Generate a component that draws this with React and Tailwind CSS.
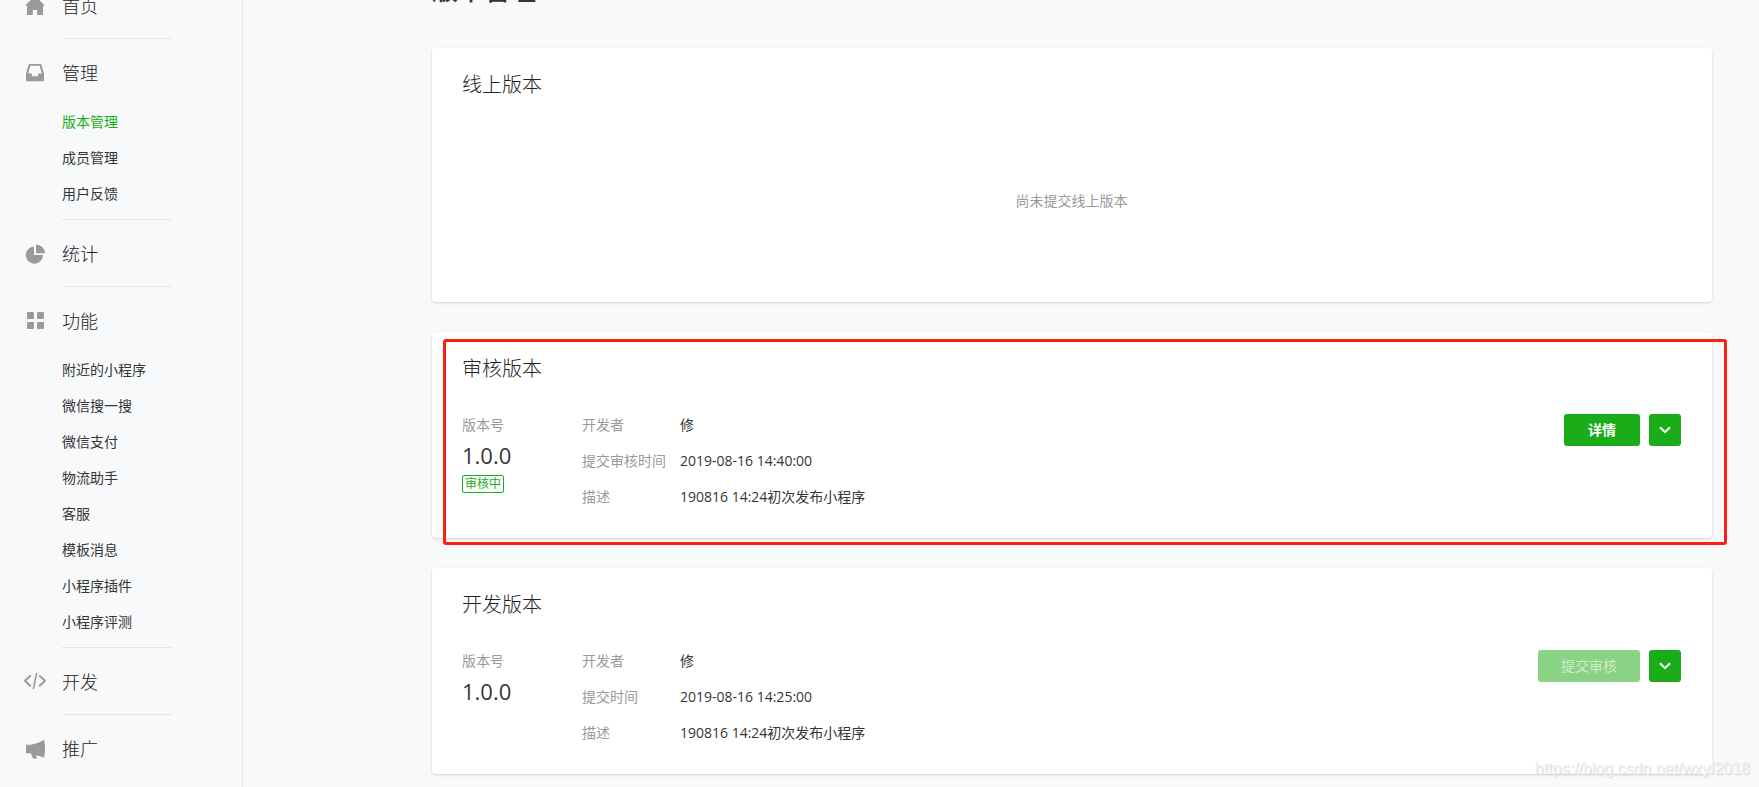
import { useState } from 'react';

const HomeIcon = () => (
  <svg viewBox="0 0 22 22" className="h-[22px] w-[22px]" fill="currentColor">
    <path d="M11 1 1 10.600h2V20h5.800v-5h4.400v5H19v-9.400h2L11 1z" />
  </svg>
);

const InboxIcon = () => (
  <svg viewBox="0 0 22 22" className="h-[22px] w-[22px]" fill="currentColor">
    <path
      fillRule="evenodd"
      d="M5.600 2h10.800c.6 0 1 .3 1.200.9L20 12v6.200a1 1 0 0 1-1 1H3a1 1 0 0 1-1-1V12l2.400-9.100c.2-.6.6-.9 1.200-.9zM6.300 3.800 4.200 11.600h3.600v2.700h6.400v-2.700h3.600l-2.100-7.800H6.300z"
    />
  </svg>
);

const PieIcon = () => (
  <svg viewBox="0 0 22 22" className="h-[22px] w-[22px]" fill="currentColor">
    <path d="M10 3.500v8.500h9a8.600 8.600 0 1 1-9-8.500z" />
    <path d="M12 1.500a9 9 0 0 1 9 8.700h-9V1.500z" />
  </svg>
);

const GridIcon = () => (
  <svg viewBox="0 0 22 22" className="h-[22px] w-[22px]" fill="currentColor">
    <rect x="3" y="2" width="7" height="7" rx="1" />
    <rect x="13" y="2" width="7" height="7" rx="1" />
    <rect x="3" y="12" width="7" height="7" rx="1" />
    <rect x="13" y="12" width="7" height="7" rx="1" />
  </svg>
);

const CodeIcon = () => (
  <svg viewBox="0 0 22 22" className="h-[22px] w-[22px]" fill="none" stroke="currentColor">
    <path d="M6.800 4.500 1 9.800l5.800 5.400M15.200 4.500l5.800 5.300-5.800 5.400" strokeWidth="2" />
    <path d="M12.600 2 9.400 18" strokeWidth="1.600" />
  </svg>
);

const HornIcon = () => (
  <svg viewBox="0 0 22 22" className="h-[22px] w-[22px]" fill="currentColor">
    <path d="M2 6.700h4.500C11 6.200 16 4.300 20 1.700c1.400 5.500 1.400 12.500 0 18-2.500-1.200-5-2-7.800-2.500l.8 3.300H8.800L7 15.200H2V6.700z" />
  </svg>
);

const ArrowIcon = () => (
  <svg viewBox="0 0 12 8" className="h-2 w-3" fill="none" stroke="currentColor" strokeWidth="2">
    <path d="M1 1.200 6 6.200l5-5" />
  </svg>
);

const menu = [
  { name: '首页', icon: HomeIcon, children: [] },
  { name: '管理', icon: InboxIcon, children: ['版本管理', '成员管理', '用户反馈'] },
  { name: '统计', icon: PieIcon, children: [] },
  {
    name: '功能',
    icon: GridIcon,
    children: ['附近的小程序', '微信搜一搜', '微信支付', '物流助手', '客服', '模板消息', '小程序插件', '小程序评测'],
  },
  { name: '开发', icon: CodeIcon, children: [] },
  { name: '推广', icon: HornIcon, children: [] },
];

const Sidebar = () => {
  const [active, setActive] = useState('版本管理');

  return (
    <nav className="w-[243px] shrink-0 border-r border-[#e4e6e9]">
      <ul className="-mt-7">
        {menu.map(({ name, icon: Icon, children }) => (
          <li key={name} className="group">
            <a href="#" className="flex items-center pt-5 text-lg font-light leading-7 text-[#222222]">
              <span className="ml-6 mr-4 text-[#9a9a9a]">
                <Icon />
              </span>
              {name}
            </a>
            {children.length > 0 ? (
              <ul className="mb-[7px] ml-[62px] mt-[17px]">
                {children.map((child) => (
                  <li key={child}>
                    <a
                      href="#"
                      onClick={() => setActive(child)}
                      className={`block text-sm leading-9 ${active === child ? 'text-[#1aad19]' : ''}`}
                    >
                      {child}
                    </a>
                  </li>
                ))}
              </ul>
            ) : (
              <div className="h-[18px]" />
            )}
            <div className="ml-[62px] h-px w-[110px] bg-[#e4e6e9] group-last:hidden" />
          </li>
        ))}
      </ul>
    </nav>
  );
};

const Card = ({ title, highlight, children }) => (
  <section className="relative rounded-[4px] bg-white pl-[30px] pr-[31px] pt-[22px] shadow-[0_1px_3px_rgba(0,0,0,0.16)]">
    <h2 className="text-xl font-light leading-[30px] text-[#222222]">{title}</h2>
    {children}
    {highlight && (
      <div className="pointer-events-none absolute -bottom-[7px] -right-[15px] left-[11px] top-[7px] rounded-[3px] border-3 border-[#ff1f12]" />
    )}
  </section>
);

const VersionInfo = ({ version, tag, rows, action }) => (
  <div className="mt-[23px] flex pb-[23px]">
    <div className="w-[120px] shrink-0">
      <div className="leading-9 text-[#9a9a9a]">版本号</div>
      <div className="text-[22px] leading-6">{version}</div>
      {tag && (
        <div className="mt-2 w-[42px] rounded-xs border border-[#1aad19] text-center text-xs leading-4 text-[#1aad19]">
          {tag}
        </div>
      )}
    </div>
    <dl className="grid flex-1 grid-cols-[98px_1fr] leading-9">
      {rows.map(([label, value]) => (
        <div key={label} className="contents">
          <dt className="text-[#9a9a9a]">{label}</dt>
          <dd>{value}</dd>
        </div>
      ))}
    </dl>
    <div className="mt-[7px] flex items-start gap-[9px]">
      {action}
      <button
        type="button"
        aria-label="更多"
        className="flex h-8 w-8 items-center justify-center rounded-[3px] bg-[#1aad19] text-white"
      >
        <ArrowIcon />
      </button>
    </div>
  </div>
);

const App = () => {
  return (
    <div className="relative flex min-h-screen overflow-hidden bg-[#f8f9fb] font-['Open_Sans','Noto_Sans_CJK_SC',sans-serif] text-sm font-normal text-[#353535]">
      <Sidebar />

      <main className="min-w-0 flex-1 pl-[189px] pr-[47px]">
        <div className="-mt-7 flex items-center justify-between">
          <h1 className="text-[26px] font-medium leading-9">版本管理</h1>
          <svg viewBox="0 0 20 20" className="mb-1 mr-0.5 h-5 w-5" fill="none" stroke="#9a9a9a" strokeWidth="1.500">
            <circle cx="10" cy="10" r="9" />
            <path d="M7.500 8a2.500 2.500 0 1 1 2.500 2.800v1.400M10 13.500V15" />
          </svg>
        </div>

        <div className="mt-10 flex flex-col gap-[30px]">
          <Card title="线上版本">
            <div className="flex h-[202px] items-center justify-center text-[#9a9a9a]">尚未提交线上版本</div>
          </Card>

          <Card title="审核版本" highlight>
            <VersionInfo
              version="1.0.0"
              tag="审核中"
              rows={[
                ['开发者', '修'],
                ['提交审核时间', '2019-08-16 14:40:00'],
                ['描述', '190816 14:24初次发布小程序'],
              ]}
              action={
                <button type="button" className="h-8 w-[76px] rounded-[3px] bg-[#1aad19] font-bold text-white">
                  详情
                </button>
              }
            />
          </Card>

          <Card title="开发版本">
            <VersionInfo
              version="1.0.0"
              rows={[
                ['开发者', '修'],
                ['提交时间', '2019-08-16 14:25:00'],
                ['描述', '190816 14:24初次发布小程序'],
              ]}
              action={
                <button
                  type="button"
                  disabled
                  className="h-8 w-[102px] rounded-[3px] bg-[#8bd384] font-normal text-[#cdebca]"
                >
                  提交审核
                </button>
              }
            />
          </Card>
        </div>
      </main>

      <div className="absolute bottom-1.5 right-[9px] font-['Liberation_Sans',sans-serif] text-base leading-6 text-[#f4f4f5] [text-shadow:1px_1px_1px_#d4d4d6]">
        https://blog.csdn.net/wxyf2018
      </div>
    </div>
  );
};

export default App;
